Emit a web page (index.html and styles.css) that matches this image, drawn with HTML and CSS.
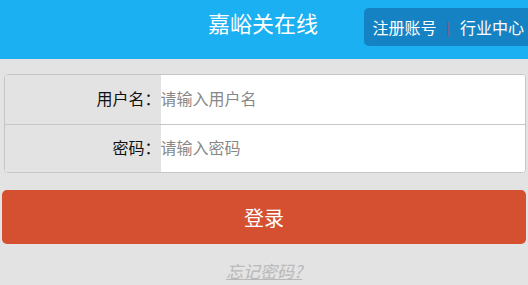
FILE: index.html
```html
<!DOCTYPE html>
<html lang="zh-CN">

<head>
    <meta charset="UTF-8">
    <meta name="viewport" content="width=device-width, initial-scale=1.0">
    <title>嘉峪关在线 - 登录</title>
    <link rel="stylesheet" href="styles.css">
</head>

<body>
    <div class="header">
        <h1 class="title">嘉峪关在线</h1>
        <div class="links">
            <a href="#">注册账号</a>
            <span class="sep">|</span>
            <a href="#">行业中心</a>
        </div>
    </div>

    <form class="login">
        <div class="box">
            <label class="row">
                <span class="label">用户名：</span>
                <input type="text" placeholder="请输入用户名">
            </label>
            <label class="row">
                <span class="label">密码：</span>
                <input type="password" placeholder="请输入密码">
            </label>
        </div>
        <button type="button" class="btn">登录</button>
        <a href="#" class="forget">忘记密码?</a>
    </form>
</body>

</html>
```

FILE: styles.css
```css
* {
    margin: 0;
    padding: 0;
    box-sizing: border-box;
}

body {
    background: #e3e3e3;
    font-family: "Noto Sans CJK SC", "Liberation Sans", sans-serif;
    color: #222;
}

.header {
    position: relative;
    height: 59px;
    background: #1ab0f1;
    display: flex;
    justify-content: center;
    align-items: center;
}

.title {
    font-size: 22px;
    font-weight: normal;
    color: #fff;
    margin-top: -15px;
    margin-left: -2px;
}

.links {
    position: absolute;
    right: -6px;
    top: 8px;
    height: 38px;
    padding: 0 10px 0 8px;
    background: #1583c3;
    border-radius: 5px;
    display: flex;
    align-items: center;
    gap: 10px;
    font-size: 16px;
}

.links a {
    color: #fff;
    text-decoration: none;
}

.links .sep {
    color: #8a5a5a;
    font-size: 13px;
}

.login {
    padding: 15px 2px 0;
    display: flex;
    flex-direction: column;
    align-items: center;
}

.box {
    width: 522px;
    margin-left: 1px;
    border: 1px solid #c6c6c6;
    border-radius: 4px;
    overflow: hidden;
    background: #fff;
}

.row {
    display: flex;
    height: 49px;
}

.row + .row {
    border-top: 1px solid #c6c6c6;
    height: 48px;
}

.label {
    width: 156px;
    background: #e3e3e3;
    display: flex;
    align-items: center;
    justify-content: flex-end;
    padding-bottom: 4px;
    font-size: 16px;
    color: #111;
}

.row input {
    flex: 1;
    border: 0;
    outline: 0;
    padding: 0 0 4px 0;
    font-family: inherit;
    font-size: 16px;
    background: #fff;
}

.row input::placeholder {
    color: #888;
}

.btn {
    width: 524px;
    height: 54px;
    margin-top: 17px;
    border: 0;
    border-radius: 5px;
    background: #d45031;
    color: #fff;
    font-family: inherit;
    font-size: 20px;
}

.forget {
    margin-top: 14px;
    font-size: 17px;
    font-style: italic;
    color: #b8b8b8;
    text-decoration: underline;
}
```
